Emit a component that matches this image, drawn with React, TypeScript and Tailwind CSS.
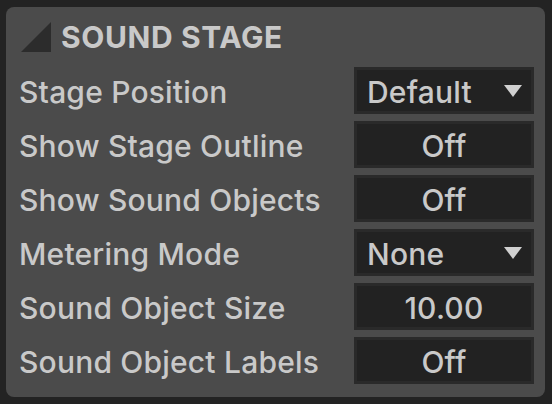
import React from "react";

const rows: { label: string; value: string; dropdown?: boolean }[] = [
  { label: "Stage Position", value: "Default", dropdown: true },
  { label: "Show Stage Outline", value: "Off" },
  { label: "Show Sound Objects", value: "Off" },
  { label: "Metering Mode", value: "None", dropdown: true },
  { label: "Sound Object Size", value: "10.00" },
  { label: "Sound Object Labels", value: "Off" },
];

export default function App() {
  return (
    <div
      className="w-[552px] h-[404px] bg-[#232323] pt-[7px] pl-[6px] overflow-hidden"
      style={{ fontFamily: "Inter, 'Noto Sans', sans-serif" }}
    >
      <div className="w-[539px] h-[390px] bg-[#4b4b4b] rounded-[8px] pl-[13px] pr-[11px] pt-[15px] flex flex-col text-[#c9c9c9]">
        <div className="flex items-center h-[30px] pl-[2px] gap-[10px]">
          <svg width="30" height="30" viewBox="0 0 30 30" className="shrink-0">
            <polygon points="0,30 30,0 30,30" fill="#2c2c2c" />
          </svg>
          <span className="text-[30px] font-bold leading-none tracking-[0.6px]">SOUND STAGE</span>
        </div>
        <div className="mt-[15px] flex flex-col gap-[7px]">
          {rows.map((r) => (
            <div key={r.label} className="flex items-center justify-between h-[47px]">
              <span className="text-[30px] font-medium leading-none pt-[2px] tracking-[0.2px]">{r.label}</span>
              <div className="w-[180px] h-[47px] border-[3px] border-[#2a2a2a] bg-[#222222] flex items-center">
                {r.dropdown ? (
                  <div className="flex items-center justify-between w-full pl-[10px] pr-[9px]">
                    <span className="text-[30px] font-medium leading-none tracking-[0.2px] pt-[2px]">{r.value}</span>
                    <svg width="18" height="12" viewBox="0 0 18 12">
                      <polygon points="0,0 18,0 9,12" fill="#d0d0d0" />
                    </svg>
                  </div>
                ) : (
                  <span className="w-full text-center text-[30px] font-medium leading-none tracking-[0.2px] pt-[2px]">{r.value}</span>
                )}
              </div>
            </div>
          ))}
        </div>
      </div>
    </div>
  );
}
